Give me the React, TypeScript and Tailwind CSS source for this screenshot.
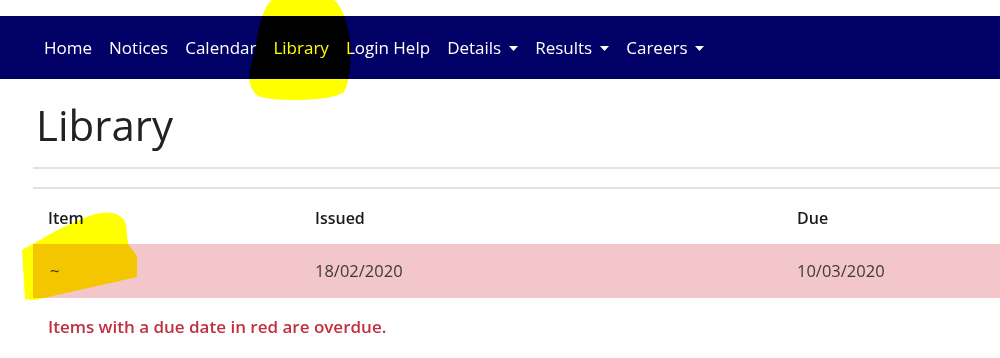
import React from "react";

const navItems: { label: string; active?: boolean; dropdown?: boolean }[] = [
	{ label: "Home" },
	{ label: "Notices" },
	{ label: "Calendar" },
	{ label: "Library", active: true },
	{ label: "Login Help" },
	{ label: "Details", dropdown: true },
	{ label: "Results", dropdown: true },
	{ label: "Careers", dropdown: true },
];

function Caret() {
	return (
		<svg width="9" height="5" viewBox="0 0 9 5" className="ml-[8px] mt-[1px]">
			<path d="M0 0 L9 0 L4.5 5 Z" fill="#ffffff" />
		</svg>
	);
}

export default function App() {
	return (
		<div
			className="relative w-[1000px] h-[358px] overflow-hidden bg-white pt-4"
			style={{ fontFamily: '"Open Sans", "Noto Sans", sans-serif' }}
		>
			{/* navbar */}
			<nav className="h-[63px] bg-[#000066] flex items-center pl-[44px] gap-[17px]">
				{navItems.map((item) => (
					<a
						key={item.label}
						href="#"
						className={
							item.active
								? "flex items-center text-[17px] text-[#ffffb0]"
								: "flex items-center text-[17px] text-white"
						}
					>
						{item.label}
						{item.dropdown && <Caret />}
					</a>
				))}
			</nav>

			{/* page */}
			<div className="pl-[33px]">
				<h1 className="pl-[3px] pt-[18px] text-[42px] leading-[56px] text-[#222222]">
					Library
				</h1>
				<div className="mt-[14px] border-t-2 border-[#e2e2e2]" />
				<table className="mt-[18px] w-[967px] border-t-2 border-[#e2e2e2] text-[16.5px]">
					<thead>
						<tr className="h-[56px]">
							<th className="w-[267px] pl-[15px] pt-[2px] text-left text-[16px] font-semibold text-[#1a1a1a]">
								Item
							</th>
							<th className="w-[482px] pl-[15px] pt-[2px] text-left text-[16px] font-semibold text-[#1a1a1a]">
								Issued
							</th>
							<th className="pl-[15px] pt-[2px] text-left text-[16px] font-semibold text-[#1a1a1a]">
								Due
							</th>
						</tr>
					</thead>
					<tbody>
						<tr className="h-[54px] bg-[#f3c6cc] text-[#3a3a3a]">
							<td className="pl-[17px]">~</td>
							<td className="pl-[15px]">18/02/2020</td>
							<td className="pl-[15px]">10/03/2020</td>
						</tr>
					</tbody>
				</table>
				<p className="pl-[15px] pt-[16px] text-[17px] font-semibold text-[#c0303f]">
					Items with a due date in red are overdue.
				</p>
			</div>

			{/* highlighter marks */}
			<svg
				className="absolute left-0 top-0 mix-blend-multiply pointer-events-none"
				width="1000"
				height="358"
				viewBox="0 0 1000 358"
			>
				<path
					d="M272 0 L334 0 C342 6 347 20 350 40 C352 60 350 80 344 92 C330 102 275 102 258 96 C250 90 248 80 250 70 C254 56 256 40 260 24 C263 12 267 4 272 0 Z"
					fill="#ffff00"
				/>
				<path
					d="M40 240 C60 228 80 218 100 213 C112 211 122 214 126 224 L128 244 L137 256 L137 277 L35 300 L25 299 L22 250 Z"
					fill="#ffff00"
				/>
			</svg>
		</div>
	);
}
